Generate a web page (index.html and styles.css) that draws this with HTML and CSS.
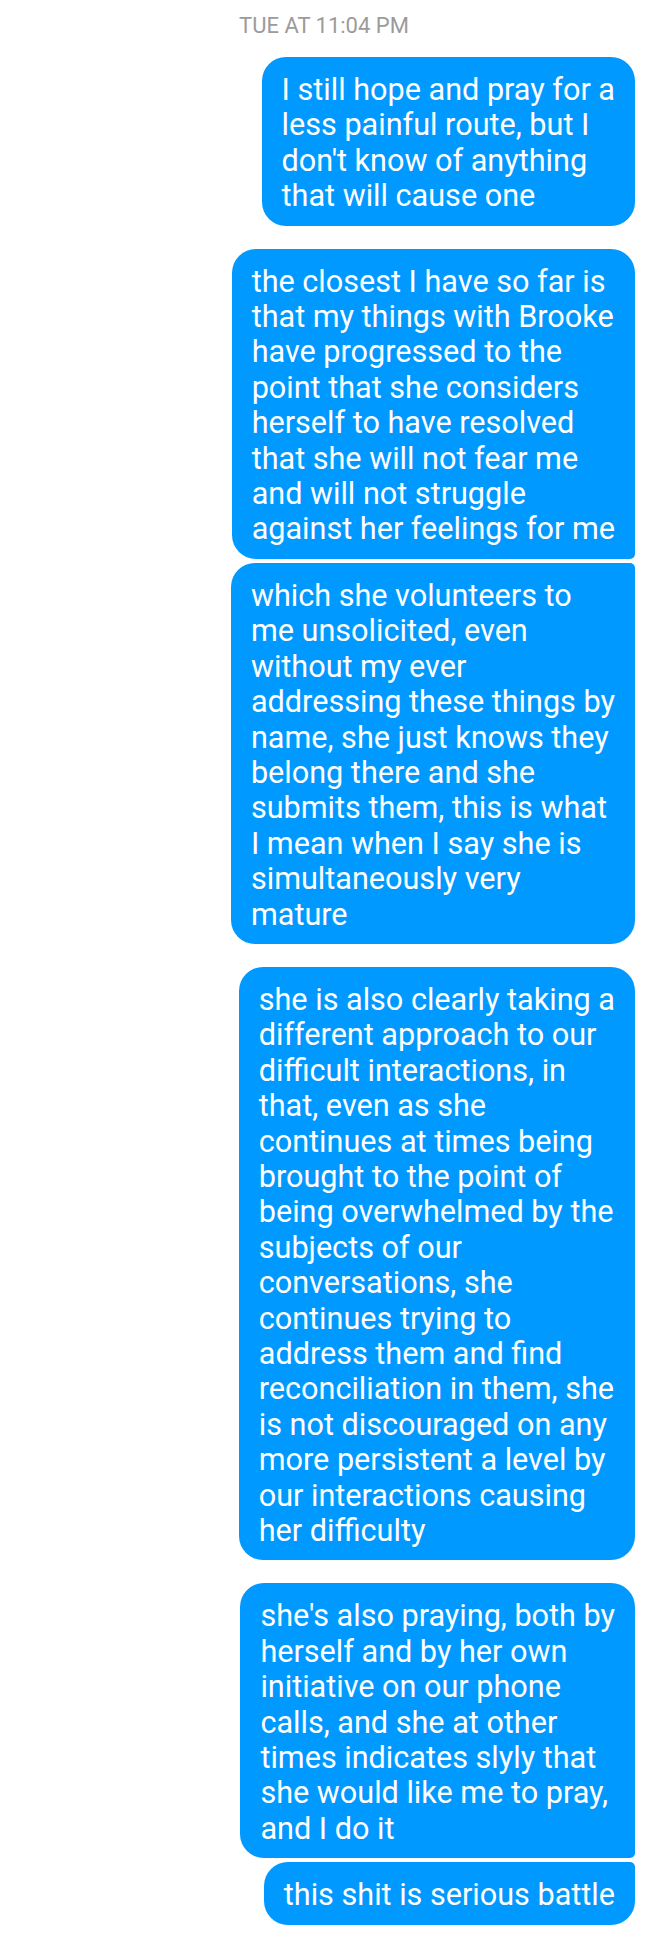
FILE: index.html
```html
<!DOCTYPE html>
<html lang="en">
<head>
<meta charset="utf-8">
<title>Messages</title>
<link rel="stylesheet" href="styles.css">
</head>
<body>
<div class="thread">
  <div class="timestamp">TUE AT 11:04 PM</div>

  <div class="group">
    <div class="bubble single">I still hope and pray for a<br>less painful route, but I<br>don't know of anything<br>that will cause one</div>
  </div>

  <div class="group">
    <div class="bubble first">the closest I have so far is<br>that my things with Brooke<br>have progressed to the<br>point that she considers<br>herself to have resolved<br>that she will not fear me<br>and will not struggle<br>against her feelings for me</div>
    <div class="bubble last">which she volunteers to<br>me unsolicited, even<br>without my ever<br>addressing these things by<br>name, she just knows they<br>belong there and she<br>submits them, this is what<br>I mean when I say she is<br>simultaneously very<br>mature</div>
  </div>

  <div class="group">
    <div class="bubble single">she is also clearly taking a<br>different approach to our<br>difficult interactions, in<br>that, even as she<br>continues at times being<br>brought to the point of<br>being overwhelmed by the<br>subjects of our<br>conversations, she<br>continues trying to<br>address them and find<br>reconciliation in them, she<br>is not discouraged on any<br>more persistent a level by<br>our interactions causing<br>her difficulty</div>
  </div>

  <div class="group">
    <div class="bubble first">she's also praying, both by<br>herself and by her own<br>initiative on our phone<br>calls, and she at other<br>times indicates slyly that<br>she would like me to pray,<br>and I do it</div>
    <div class="bubble last">this shit is serious battle</div>
  </div>
</div>
</body>
</html>
```

FILE: styles.css
```css
html, body {
  margin: 0;
  padding: 0;
  background: #ffffff;
}

body {
  font-family: Roboto, "Noto Sans", "Liberation Sans", sans-serif;
}

.thread {
  display: flex;
  flex-direction: column;
  padding: 14px 13px 16px 13px;
  gap: 23px;
}

.timestamp {
  text-align: center;
  font-size: 22px;
  line-height: 24px;
  color: #9b9b9b;
  margin-bottom: -4px;
}

.group {
  display: flex;
  flex-direction: column;
  align-items: flex-end;
  gap: 4px;
}

.bubble {
  box-sizing: border-box;
  white-space: nowrap;
  background: #0099ff;
  color: #ffffff;
  font-size: 30.6px;
  line-height: 35.4px;
  padding: 15px 20px 12px 20px;
  border-radius: 24px;
}

.bubble.first {
  border-bottom-right-radius: 5px;
}

.bubble.last {
  border-top-right-radius: 5px;
}
```
